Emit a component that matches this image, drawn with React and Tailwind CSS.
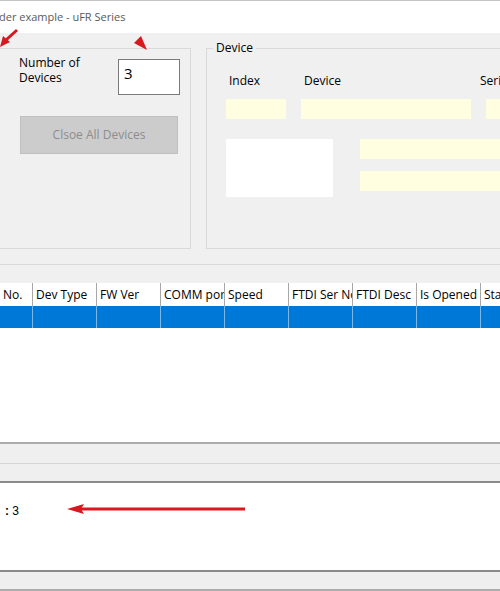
import React from 'react';

const cols = ['No.', 'Dev Type', 'FW Ver', 'COMM port', 'Speed', 'FTDI Ser No', 'FTDI Desc', 'Is Opened', 'Status'];

function Arrows() {
  return (
    <svg className="absolute inset-0 pointer-events-none" width="500" height="591" viewBox="0 0 500 591">
      {/* top-left arrow */}
      <line x1="17" y1="30" x2="6" y2="40" stroke="#d7191f" strokeWidth="3" />
      <polygon points="0,47 3,36 10,42" fill="#d7191f" />
      {/* arrowhead near the count box */}
      <polygon points="147,50 134,43 141,36" fill="#d7191f" />
      {/* bottom arrow */}
      <line x1="245" y1="509" x2="80" y2="509" stroke="#d7191f" strokeWidth="3" />
      <polygon points="67,509 84,504 81,509 84,514" fill="#d7191f" />
    </svg>
  );
}

export default function App() {
  return (
    <div
      className="relative w-[500px] h-[591px] overflow-hidden bg-[#f0f0f0] text-[12px] text-black"
      style={{ fontFamily: '"Segoe UI", "Open Sans", "Noto Sans", sans-serif' }}
    >
      {/* title bar */}
      <div className="h-[33px] bg-white border-t border-[#c4c4c4] flex items-center">
        <span className="text-[#5a5a5a] text-[11px] -ml-[1px]">der example - uFR Series</span>
      </div>

      {/* upper panel */}
      <div className="flex h-[232px] border-b border-[#dadada]">
        <div className="relative shrink-0 mt-[15px] w-[191px] h-[201px] border-y border-r border-[#d9d9d9]">
          <div className="flex pt-[6px]">
            <div className="pl-[19px] w-[118px] leading-[15px]">
              Number of
              <br />
              Devices
            </div>
            <div className="mt-[4px] w-[62px] h-[36px] bg-white border border-[#7a7a7a] px-[5px] pt-[3px] text-[15px] leading-[20px]">
              3
            </div>
          </div>
          <div className="ml-[20px] mt-[21px] w-[158px] h-[38px] bg-[#cccccc] border border-[#bfbfbf] flex items-center justify-center text-[#8c8c8c]">
            Clsoe All Devices
          </div>
        </div>

        <div className="relative ml-[15px] mt-[15px] flex-1 h-[201px] border-y border-l border-[#d9d9d9]">
          <span className="absolute -top-[9px] left-[6px] bg-[#f0f0f0] px-[3px] leading-[16px]">Device</span>
          <div className="flex pt-[24px] leading-[16px]">
            <span className="ml-[22px] w-[75px]">Index</span>
            <span className="w-[176px]">Device</span>
            <span>Serial</span>
          </div>
          <div className="flex gap-[15px] mt-[10px] pl-[19px]">
            <div className="w-[60px] h-[20px] bg-[#fffee1]" />
            <div className="w-[170px] h-[20px] bg-[#fffee1]" />
            <div className="w-[60px] h-[20px] bg-[#fffee1]" />
          </div>
          <div className="flex mt-[20px] pl-[19px]">
            <div className="w-[107px] h-[58px] bg-white" />
            <div className="ml-[27px] flex-1 flex flex-col gap-[12px]">
              <div className="h-[20px] bg-[#fffee1]" />
              <div className="h-[20px] bg-[#fffee1]" />
            </div>
          </div>
        </div>
      </div>

      {/* list view */}
      <div className="mt-[18px] h-[159px] bg-white">
        <div className="flex h-[23px] bg-white">
          {cols.map((c, i) => (
            <div
              key={c}
              className={`${i === 0 ? 'w-[33px]' : 'w-[64px]'} shrink-0 border-r border-[#a8a8a8] pl-[3px] pt-[1px] flex items-center whitespace-nowrap overflow-hidden`}
            >
              {c}
            </div>
          ))}
        </div>
        <div className="flex h-[22px] bg-[#0078d7]">
          {cols.map((c, i) => (
            <div key={c} className={`${i === 0 ? 'w-[33px]' : 'w-[64px]'} shrink-0 border-r border-[#7ab8ea]`} />
          ))}
        </div>
      </div>

      {/* status strips */}
      <div className="border-t-2 border-b border-t-[#ababab] border-b-[#d4d4d4] h-[22px] bg-[#efefef]" />
      <div className="h-[19px] bg-[#efefef] border-b-2 border-[#8a8a8a]" />
      <div className="h-[87px] bg-white flex items-start">
        <span className="ml-[5px] mt-[19px]" style={{ fontFamily: '"Liberation Sans", sans-serif' }}>
          <b>:</b> 3
        </span>
      </div>
      <div className="border-t-2 border-b-2 border-t-[#8a8a8a] border-b-[#acacac] h-[21px] bg-[#efefef]" />

      <Arrows />
    </div>
  );
}
